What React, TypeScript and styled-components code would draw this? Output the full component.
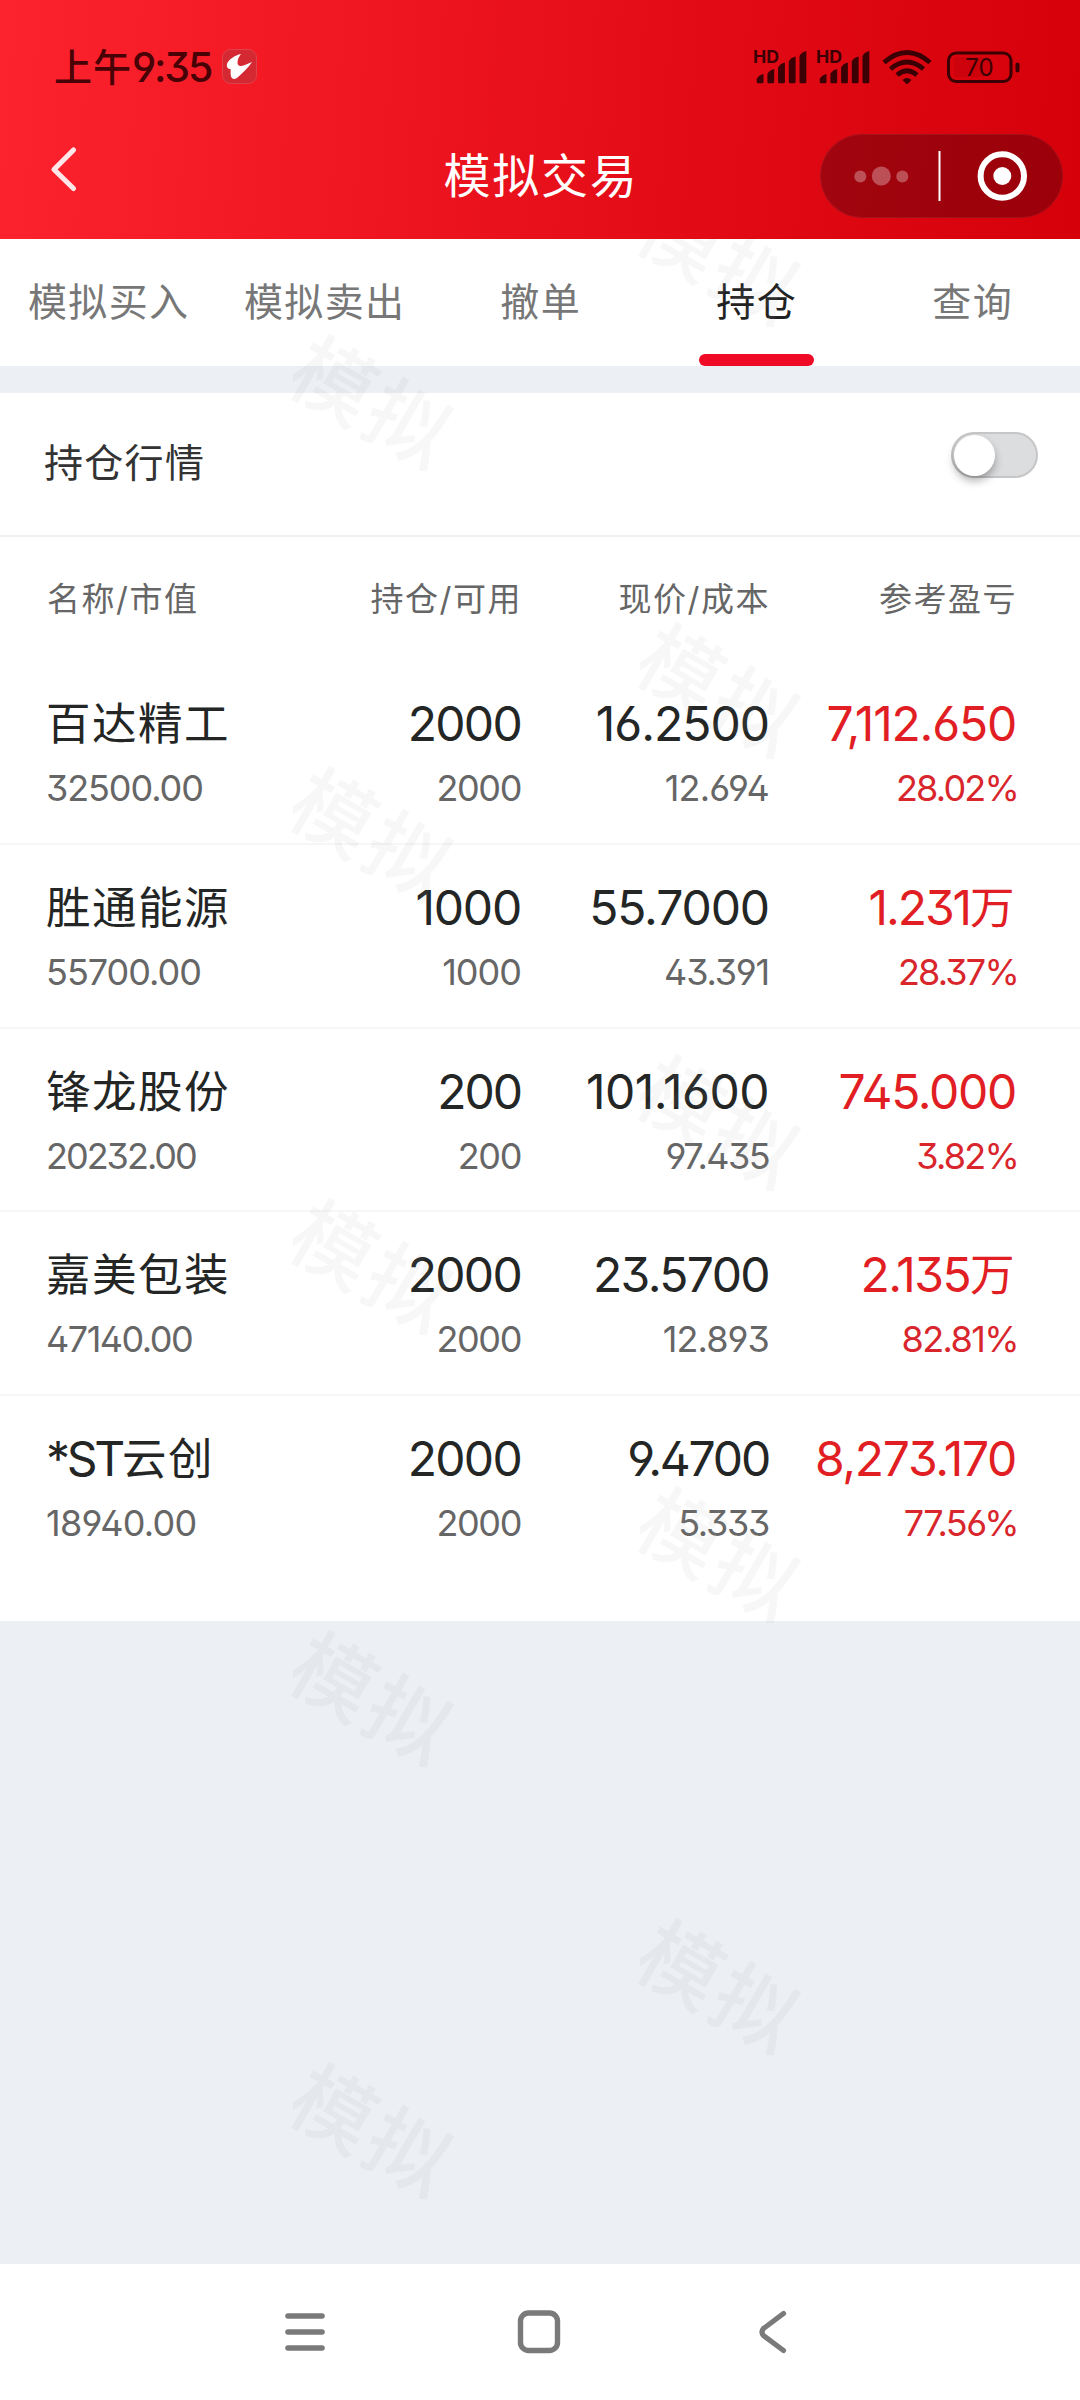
import React from 'react';
import styled, { createGlobalStyle } from 'styled-components';

const GlobalStyle = createGlobalStyle`
  * { box-sizing: border-box; }
  body {
    margin: 0;
    background: #eceff4;
    font-family: Inter, 'Noto Sans CJK SC', sans-serif;
    font-feature-settings: 'ss01', 'cv09';
  }
`;

const Screen = styled.div`
  position: relative;
  display: flex;
  flex-direction: column;
  width: 1080px;
  height: 2400px;
  overflow: hidden;
  background: #eceff4;
`;

const Header = styled.header`
  position: relative;
  z-index: 2;
  height: 239px;
  flex: none;
  display: flex;
  flex-direction: column;
  background: linear-gradient(94deg, #fd232e 0%, #e8101a 50%, #d5000a 100%);
`;

const StatusBar = styled.div`
  height: 133px;
  display: flex;
  align-items: center;
  justify-content: space-between;
  padding: 0 60px 0 54px;
  color: #480206;
`;

const StatusSide = styled.div`
  display: flex;
  align-items: center;
`;

const StatusIcons = styled(StatusSide)`
  padding-top: 2px;
`;

const Clock = styled.span`
  display: flex;
  font-size: 41px;
  font-weight: 500;
  line-height: 48px;
  letter-spacing: -2.2px;
  margin-right: 11px;
`;

const Meridiem = styled.span`
  font-size: 38px;
  letter-spacing: 1px;
`;

const TitleBar = styled.div`
  flex: 1;
  display: grid;
  grid-template-columns: 300px 1fr 300px;
  align-items: start;
`;

const BackButton = styled.button`
  border: 0;
  background: none;
  padding: 12px 0 0 48px;
  text-align: left;
  line-height: 0;
`;

const Title = styled.h1`
  margin: 0;
  padding: 12.5px 0 0 2px;
  font-size: 47px;
  font-weight: 400;
  line-height: 60px;
  letter-spacing: 1.7px;
  text-align: center;
  color: #fff;
`;

const Capsule = styled.div`
  justify-self: end;
  margin: 1px 17px 0 0;
  width: 243px;
  height: 84px;
  border-radius: 42px;
  background: rgba(35, 0, 8, 0.33);
  box-shadow: inset 0 0 0 1px rgba(190, 60, 70, 0.25);
`;

const Tabs = styled.nav`
  height: 127px;
  flex: none;
  display: grid;
  grid-template-columns: repeat(5, 1fr);
  background: #fff;
`;

const Tab = styled.div<{ $active?: boolean }>`
  display: flex;
  flex-direction: column;
  align-items: center;
  justify-content: space-between;
  padding-top: 38px;
  font-size: 39px;
  line-height: 50px;
  color: ${(p) => (p.$active ? '#222' : '#777')};
`;

const TabLabel = styled.span`
  padding-left: 1.3px;
  letter-spacing: 1.3px;
`;

const TabMark = styled.i`
  width: 115px;
  height: 12px;
  border-radius: 6px;
  background: #ef0a25;
`;

const Panel = styled.main`
  margin-top: 27px;
  height: 1228px;
  flex: none;
  background: #fff;
`;

const SwitchRow = styled.div`
  height: 144px;
  display: flex;
  justify-content: space-between;
  align-items: flex-start;
  padding: 39px 42px 0 44px;
  border-bottom: 2px solid #f0f0f0;
`;

const SwitchLabel = styled.span`
  margin-top: 6px;
  font-size: 39px;
  line-height: 50px;
  letter-spacing: 1.3px;
  color: #333;
`;

const Toggle = styled.span`
  width: 87px;
  height: 46px;
  padding: 1px;
  border-radius: 23px;
  border: 2px solid #c6c6c7;
  background: #dcdddf;
`;

const Knob = styled.span`
  display: block;
  width: 41px;
  height: 41px;
  border-radius: 50%;
  background: #fff;
  box-shadow: 0 5px 9px rgba(0, 0, 0, 0.3);
`;

const columns = `
  display: grid;
  grid-template-columns: 230px 245px 248px 247px;
  padding-left: 46px;
  text-align: right;
  & > :first-child { text-align: left; }
`;

const HeadRow = styled.div`
  ${columns}
  height: 124.3px;
  padding: 42px 0 0 47px;
  font-size: 33px;
  line-height: 40px;
  letter-spacing: 1.5px;
  color: #666;
`;

const HoldingRow = styled.div`
  ${columns}
  height: 183.67px;
  padding-top: 33px;
  border-bottom: 2px solid #f6f6f8;
  &:last-child { border-bottom: 0; }
`;

const Cell = styled.div<{ $gain?: boolean }>`
  color: ${(p) => (p.$gain ? '#e11e23' : '#242625')};
`;

const Main = styled.div<{ $tracking: number }>`
  height: 60px;
  font-size: 48px;
  line-height: 60px;
  white-space: nowrap;
  letter-spacing: ${(p) => p.$tracking}px;
`;

const Han = styled.span`
  font-size: 44.5px;
  line-height: 1;
  letter-spacing: 1.5px;
  vertical-align: 1px;
`;

const Sub = styled.div<{ $gain?: boolean; $tracking: number }>`
  margin: 14px ${(p) => (p.$gain ? -2 : 0)}px 0 0;
  font-size: 36px;
  line-height: 40px;
  white-space: nowrap;
  letter-spacing: ${(p) => p.$tracking}px;
  color: ${(p) => (p.$gain ? '#d8262c' : '#666')};
`;

const NavBar = styled.footer`
  margin-top: auto;
  height: 136px;
  flex: none;
  display: flex;
  gap: 187px;
  padding: 43px 0 0 282px;
  background: #fff;
`;

const Watermarks = styled.div`
  position: absolute;
  inset: 0;
  z-index: 1;
  pointer-events: none;
`;

const Mark = styled.span<{ $x: number; $y: number }>`
  position: absolute;
  left: ${(p) => p.$x - 99}px;
  top: ${(p) => p.$y - 49}px;
  width: 200px;
  line-height: 100px;
  text-align: center;
  font-size: 82px;
  font-weight: 500;
  letter-spacing: 4px;
  color: rgba(155, 165, 145, 0.085);
  transform: rotate(30deg);
`;

const IconGap = styled.span<{ $width: number }>`
  width: ${(p) => p.$width}px;
`;

const SignalIcon = styled.svg`
  overflow: visible;
`;

const BAR_TOPS = [24, 19, 12.5, 6.5, 1];

const Signal = () => (
  <SignalIcon width="63" height="36" viewBox="0 0 63 36" fill="#3a0003">
    <text x="-1" y="12.5" fontSize="17" fontWeight="700" fontFamily="Inter" textLength="26" lengthAdjust="spacingAndGlyphs">HD</text>
    {BAR_TOPS.map((t, i) => {
      const x = 2.7 + i * 10.7;
      return <path key={i} d={`M${x} ${t + 5}Q${x + 2} ${t + 1} ${x + 6.8} ${t}V32a1.3 1.3 0 0 1-1.3 1.3H${x + 1.3}a1.3 1.3 0 0 1-1.3-1.3Z`} />;
    })}
  </SignalIcon>
);

const Wifi = () => (
  <svg width="50" height="36" viewBox="0 0 50 36" fill="none" stroke="#3a0003" strokeWidth="4.8">
    <path d="M2 12.5Q25-7.5 48 12.5" />
    <path d="M8.5 19Q25 5 41.500 19" />
    <path d="M15 25Q25 16.500 35 25" />
    <path d="M20.500 30Q25 26 29.500 30L26 33.500Q25 34.500 24 33.500Z" fill="#3a0003" stroke="none" />
  </svg>
);

const Battery = () => (
  <svg width="74" height="34" viewBox="0 0 74 34">
    <rect x="2.500" y="2" width="62.500" height="28.500" rx="7.500" fill="none" stroke="#3a0003" strokeWidth="3" />
    <rect x="8" y="6" width="36" height="20" rx="3" fill="#b8000a" opacity=".4" />
    <rect x="69.500" y="11.500" width="4" height="10" rx="2" fill="#3a0003" />
    <text x="33.500" y="25" fontSize="24" fontFamily="Inter" textAnchor="middle" fill="#3a0003">70</text>
  </svg>
);

const AppBadge = () => (
  <svg width="35" height="35" viewBox="0 0 35 35">
    <rect x=".5" y=".5" width="34" height="34" rx="8" fill="#d42833" stroke="#e0404a" />
    <path d="M19 5C13 6 6 11 5 15c-.7 3 1 5 3.500 5C9 23 8 27 10 29c1 1.500 4 1 5.500-.500C20 24.500 26 19 30 13c-4 1.500-8 3.500-11 4-2 .3-3.500-1-3.500-3.500 0-3 1.500-6 3.500-8.500Z" fill="#fff" />
  </svg>
);

type Figure = [text: string, tracking: number];

const TABS = ['模拟买入', '模拟卖出', '撤单', '持仓', '查询'];
const HEADS = ['名称/市值', '持仓/可用', '现价/成本', '参考盈亏'];
const HOLDINGS: Figure[][] = [
  [['百达精工', 0], ['32500.00', -1.1], ['2000', -1.7], ['2000', -1.4], ['16.2500', -1], ['12.694', -0.8], ['7,112.650', -1.2], ['28.02%', -1.8]],
  [['胜通能源', 0], ['55700.00', -1], ['1000', -1.2], ['1000', -1], ['55.7000', -1.1], ['43.391', -1.2], ['1.231万', -2.1], ['28.37%', -1.8]],
  [['锋龙股份', 0], ['20232.00', -2], ['200', -2], ['200', -1.4], ['101.1600', -0.5], ['97.435', -1.6], ['745.000', -1.3], ['3.82%', -1.8]],
  [['嘉美包装', 0], ['47140.00', -1.5], ['2000', -1.7], ['2000', -1.4], ['23.5700', -1.6], ['12.893', -0.9], ['2.135万', -1.6], ['82.81%', -1.6]],
  [['*ST云创', -3.3], ['18940.00', -0.7], ['2000', -1.7], ['2000', -1.4], ['9.4700', -2.2], ['5.333', -1.3], ['8,273.170', -1.3], ['77.56%', -1.6]],
];
const MARKS = [
  [718, 260], [371, 404], [718, 692], [371, 836], [718, 1124],
  [371, 1268], [718, 1556], [371, 1700], [718, 1988], [371, 2132],
];

const Mixed = ({ text }: { text: string }) => (
  <>
    {text.split(/([\u4e00-\u9fff]+)/).filter(Boolean).map((part, i) =>
      /[\u4e00-\u9fff]/.test(part) ? <Han key={i}>{part}</Han> : part,
    )}
  </>
);

export default function App() {
  return (
    <Screen>
      <GlobalStyle />
      <Header>
        <StatusBar>
          <StatusSide>
            <Clock><Meridiem>上午</Meridiem>9:35</Clock>
            <AppBadge />
          </StatusSide>
          <StatusIcons>
            <Signal />
            <Signal />
            <IconGap $width={2} />
            <Wifi />
            <IconGap $width={14} />
            <Battery />
          </StatusIcons>
        </StatusBar>
        <TitleBar>
          <BackButton aria-label="返回">
            <svg width="32" height="48" viewBox="0 0 32 48" fill="none" stroke="#ffe6e8" strokeWidth="5.200" strokeLinecap="round" strokeLinejoin="round">
              <path d="M25.500 5L6 24.500L25.500 43.500" />
            </svg>
          </BackButton>
          <Title>模拟交易</Title>
          <Capsule>
            <svg width="243" height="84" viewBox="0 0 243 84" fill="#fff">
              <g opacity=".3">
                <circle cx="40.300" cy="42.500" r="6" />
                <circle cx="61.300" cy="42" r="9.500" />
                <circle cx="82.300" cy="42.500" r="6" />
              </g>
              <rect x="118.500" y="17" width="2" height="50" />
              <circle cx="182.300" cy="42" r="21.700" fill="none" stroke="#fff" strokeWidth="6" />
              <circle cx="182.300" cy="42" r="9" />
            </svg>
          </Capsule>
        </TitleBar>
      </Header>
      <Tabs>
        {TABS.map((t) => (
          <Tab key={t} $active={t === '持仓'}>
            <TabLabel>{t}</TabLabel>
            {t === '持仓' && <TabMark />}
          </Tab>
        ))}
      </Tabs>
      <Panel>
        <SwitchRow>
          <SwitchLabel>持仓行情</SwitchLabel>
          <Toggle><Knob /></Toggle>
        </SwitchRow>
        <HeadRow>
          {HEADS.map((h) => <span key={h}>{h}</span>)}
        </HeadRow>
        <div>
          {HOLDINGS.map((h) => (
            <HoldingRow key={h[0][0]}>
              {[0, 2, 4, 6].map((c) => (
                <Cell key={c} $gain={c === 6}>
                  <Main $tracking={h[c][1]}><Mixed text={h[c][0]} /></Main>
                  <Sub $gain={c === 6} $tracking={h[c + 1][1]}>{h[c + 1][0]}</Sub>
                </Cell>
              ))}
            </HoldingRow>
          ))}
        </div>
      </Panel>
      <NavBar>
        <svg width="46" height="50" viewBox="0 0 46 50" stroke="#7a7a7a" strokeWidth="5.600" strokeLinecap="round">
          <path d="M6 9H40M6 25H40M6 41H40" />
        </svg>
        <svg width="48" height="50" viewBox="0 0 48 50" fill="none" stroke="#7a7a7a" strokeWidth="5.400">
          <rect x="5.500" y="6" width="37" height="37.500" rx="8" />
        </svg>
        <svg width="46" height="50" viewBox="0 0 46 50" fill="none" stroke="#7a7a7a" strokeWidth="5.200" strokeLinecap="round">
          <path d="M33.500 6.500L13.500 21.500Q10.500 25 13.500 28.500L33.500 43.500" />
        </svg>
      </NavBar>
      <Watermarks>
        {MARKS.map(([x, y]) => <Mark key={`${x}-${y}`} $x={x} $y={y}>模拟</Mark>)}
      </Watermarks>
    </Screen>
  );
}
